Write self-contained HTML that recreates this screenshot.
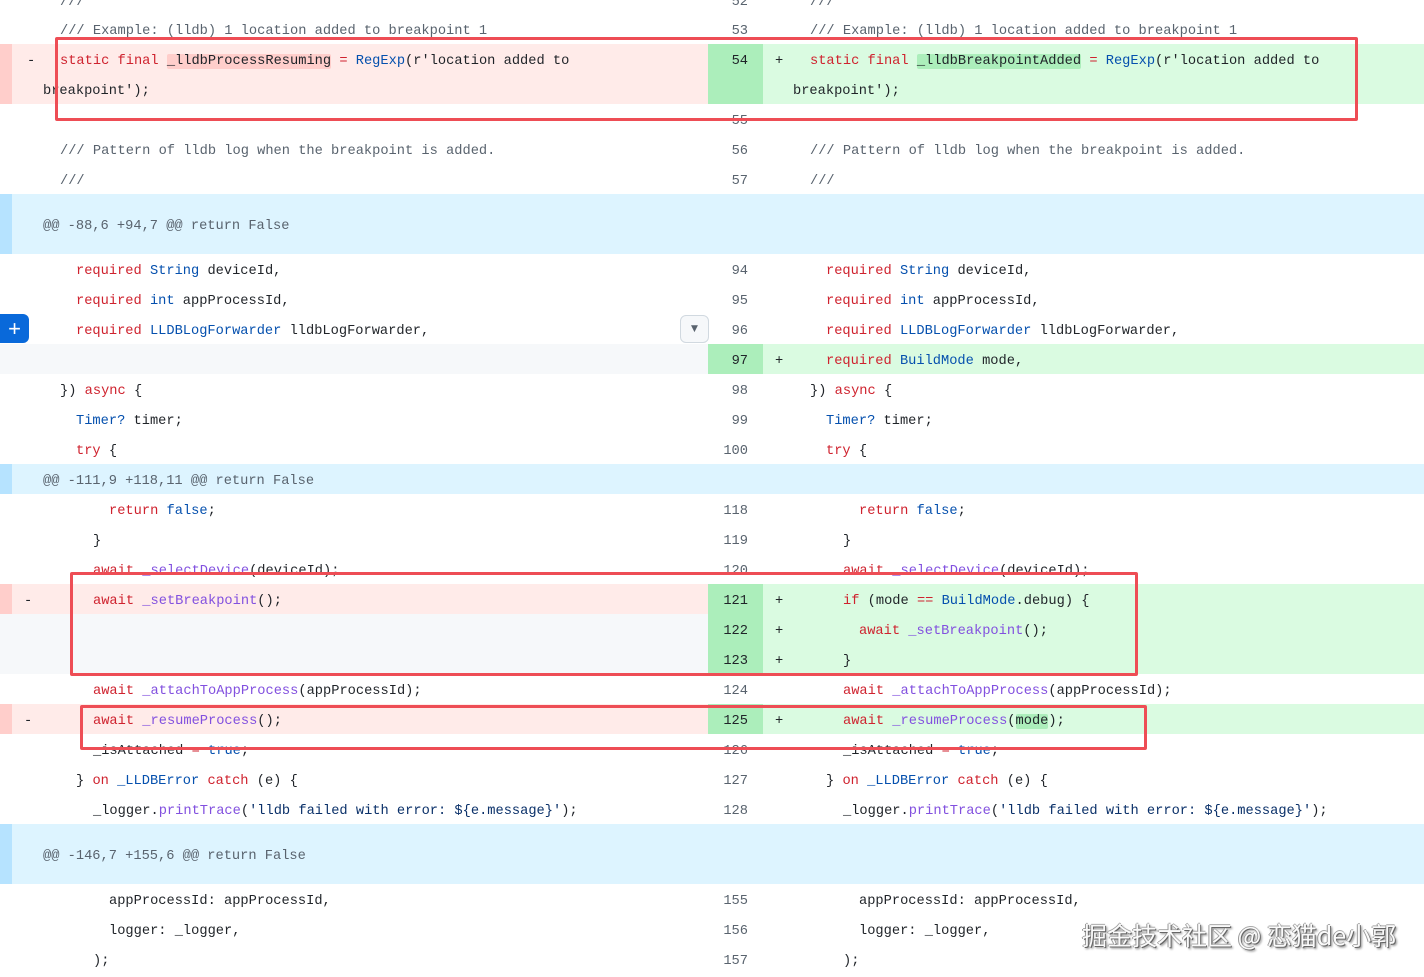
<!DOCTYPE html>
<html><head><meta charset="utf-8"><style>
*{margin:0;padding:0;box-sizing:border-box}
body{width:1424px;height:976px;overflow:hidden;background:#fff;position:relative;font-family:"Liberation Mono",monospace;font-size:13.7px;color:#1f2328}
.r{position:absolute;left:0;width:1424px;height:30px}
.l{position:absolute;left:0;top:0;width:708px;height:100%}
.n{position:absolute;left:708px;top:0;width:55px;height:100%;text-align:right;padding-right:15px;padding-top:3px;line-height:30px;color:#59636e}
.rt{position:absolute;left:763px;top:0;right:0;height:100%}
.t{position:absolute;white-space:pre;line-height:30px;top:0;margin-top:3px}
.del .l{background:#ffebe9}
.del .l::before{content:"";position:absolute;left:0;top:0;width:12px;height:100%;background:#ffcecb}
.add .n{background:#aceebb;color:#1f2328}
.add .rt{background:#dafbe1}
.emp .l{background:#f6f8fa}
.hk{background:#ddf4ff}
.hk::before{content:"";position:absolute;left:0;top:0;width:12px;height:100%;background:#b6e3ff}
.k{color:#cf222e}.ty{color:#0550ae}.f{color:#8250df}.c{color:#59636e}.s{color:#0a3069}
.hd{background:#ffcecb;border-radius:2px}.ha{background:#aceebb;border-radius:2px}
.box{position:absolute;border:3px solid #ee4d55;border-radius:2px}
</style></head><body>

<div class="r" style="top:-15px"><div class="t c" style="left:60px">///</div><div class="n" style="left:708px">52</div><div class="t c" style="left:810px">///</div></div>
<div class="r" style="top:14px"><div class="t c" style="left:60px">/// Example: (lldb) 1 location added to breakpoint 1</div><div class="n">53</div><div class="t c" style="left:810px">/// Example: (lldb) 1 location added to breakpoint 1</div></div>
<div class="r del add" style="top:44px;height:60px"><div class="l"></div><div class="n">54</div><div class="rt"></div>
<div class="t" style="left:27px">-</div><div class="t" style="left:60px"><span class="k">static</span> <span class="k">final</span> <span class="hd">_lldbProcessResuming</span> <span class="k">=</span> <span class="ty">RegExp</span>(r'location added to</div>
<div class="t" style="left:43px;top:30px">breakpoint');</div>
<div class="t" style="left:775px">+</div><div class="t" style="left:810px"><span class="k">static</span> <span class="k">final</span> <span class="ha">_lldbBreakpointAdded</span> <span class="k">=</span> <span class="ty">RegExp</span>(r'location added to</div>
<div class="t" style="left:793px;top:30px">breakpoint');</div></div>
<div class="r" style="top:104px"><div class="n">55</div></div>
<div class="r" style="top:134px"><div class="t c" style="left:60px">/// Pattern of lldb log when the breakpoint is added.</div><div class="n">56</div><div class="t c" style="left:810px">/// Pattern of lldb log when the breakpoint is added.</div></div>
<div class="r" style="top:164px"><div class="t c" style="left:60px">///</div><div class="n">57</div><div class="t c" style="left:810px">///</div></div>
<div class="r hk" style="top:194px;height:60px"><div class="t c" style="left:43px;line-height:60px">@@ -88,6 +94,7 @@ return False</div></div>
<div class="r" style="top:254px"><div class="t" style="left:76px"><span class="k">required</span> <span class="ty">String</span> deviceId,</div><div class="n">94</div><div class="t" style="left:826px"><span class="k">required</span> <span class="ty">String</span> deviceId,</div></div>
<div class="r" style="top:284px"><div class="t" style="left:76px"><span class="k">required</span> <span class="ty">int</span> appProcessId,</div><div class="n">95</div><div class="t" style="left:826px"><span class="k">required</span> <span class="ty">int</span> appProcessId,</div></div>
<div class="r" style="top:314px"><div class="t" style="left:76px"><span class="k">required</span> <span class="ty">LLDBLogForwarder</span> lldbLogForwarder,</div><div class="n">96</div><div class="t" style="left:826px"><span class="k">required</span> <span class="ty">LLDBLogForwarder</span> lldbLogForwarder,</div></div>
<div class="r emp add" style="top:344px"><div class="l"></div><div class="n">97</div><div class="rt"></div><div class="t" style="left:775px">+</div><div class="t" style="left:826px"><span class="k">required</span> <span class="ty">BuildMode</span> mode,</div></div>
<div class="r" style="top:374px"><div class="t" style="left:60px">}) <span class="k">async</span> {</div><div class="n">98</div><div class="t" style="left:810px">}) <span class="k">async</span> {</div></div>
<div class="r" style="top:404px"><div class="t" style="left:76px"><span class="ty">Timer?</span> timer;</div><div class="n">99</div><div class="t" style="left:826px"><span class="ty">Timer?</span> timer;</div></div>
<div class="r" style="top:434px"><div class="t" style="left:76px"><span class="k">try</span> {</div><div class="n">100</div><div class="t" style="left:826px"><span class="k">try</span> {</div></div>
<div class="r hk" style="top:464px"><div class="t c" style="left:43px">@@ -111,9 +118,11 @@ return False</div></div>
<div class="r" style="top:494px"><div class="t" style="left:109px"><span class="k">return</span> <span class="ty">false</span>;</div><div class="n">118</div><div class="t" style="left:859px"><span class="k">return</span> <span class="ty">false</span>;</div></div>
<div class="r" style="top:524px"><div class="t" style="left:93px">}</div><div class="n">119</div><div class="t" style="left:843px">}</div></div>
<div class="r" style="top:554px"><div class="t" style="left:93px"><span class="k">await</span> <span class="f">_selectDevice</span>(deviceId);</div><div class="n">120</div><div class="t" style="left:843px"><span class="k">await</span> <span class="f">_selectDevice</span>(deviceId);</div></div>
<div class="r del add" style="top:584px"><div class="l"></div><div class="n">121</div><div class="rt"></div><div class="t" style="left:24px">-</div><div class="t" style="left:93px"><span class="k">await</span> <span class="f">_setBreakpoint</span>();</div><div class="t" style="left:775px">+</div><div class="t" style="left:843px"><span class="k">if</span> (mode <span class="k">==</span> <span class="ty">BuildMode</span>.debug) {</div></div>
<div class="r emp add" style="top:614px"><div class="l"></div><div class="n">122</div><div class="rt"></div><div class="t" style="left:775px">+</div><div class="t" style="left:859px"><span class="k">await</span> <span class="f">_setBreakpoint</span>();</div></div>
<div class="r emp add" style="top:644px"><div class="l"></div><div class="n">123</div><div class="rt"></div><div class="t" style="left:775px">+</div><div class="t" style="left:843px">}</div></div>
<div class="r" style="top:674px"><div class="t" style="left:93px"><span class="k">await</span> <span class="f">_attachToAppProcess</span>(appProcessId);</div><div class="n">124</div><div class="t" style="left:843px"><span class="k">await</span> <span class="f">_attachToAppProcess</span>(appProcessId);</div></div>
<div class="r del add" style="top:704px"><div class="l"></div><div class="n">125</div><div class="rt"></div><div class="t" style="left:24px">-</div><div class="t" style="left:93px"><span class="k">await</span> <span class="f">_resumeProcess</span>();</div><div class="t" style="left:775px">+</div><div class="t" style="left:843px"><span class="k">await</span> <span class="f">_resumeProcess</span>(<span class="ha">mode</span>);</div></div>
<div class="r" style="top:734px"><div class="t" style="left:93px">_isAttached <span class="k">=</span> <span class="ty">true</span>;</div><div class="n">126</div><div class="t" style="left:843px">_isAttached <span class="k">=</span> <span class="ty">true</span>;</div></div>
<div class="r" style="top:764px"><div class="t" style="left:76px">} <span class="k">on</span> <span class="ty">_LLDBError</span> <span class="k">catch</span> (e) {</div><div class="n">127</div><div class="t" style="left:826px">} <span class="k">on</span> <span class="ty">_LLDBError</span> <span class="k">catch</span> (e) {</div></div>
<div class="r" style="top:794px"><div class="t" style="left:93px">_logger.<span class="f">printTrace</span>(<span class="s">'lldb failed with error: ${e.message}'</span>);</div><div class="n">128</div><div class="t" style="left:843px">_logger.<span class="f">printTrace</span>(<span class="s">'lldb failed with error: ${e.message}'</span>);</div></div>
<div class="r hk" style="top:824px;height:60px"><div class="t c" style="left:43px;line-height:60px">@@ -146,7 +155,6 @@ return False</div></div>
<div class="r" style="top:884px"><div class="t" style="left:109px">appProcessId: appProcessId,</div><div class="n">155</div><div class="t" style="left:859px">appProcessId: appProcessId,</div></div>
<div class="r" style="top:914px"><div class="t" style="left:109px">logger: _logger,</div><div class="n">156</div><div class="t" style="left:859px">logger: _logger,</div></div>
<div class="r" style="top:944px"><div class="t" style="left:93px">);</div><div class="n">157</div><div class="t" style="left:843px">);</div></div>

<div style="position:absolute;left:0;top:314px;width:29px;height:29px;background:#0969da;border-radius:0 6px 6px 0;color:#fff;font:22px/29px 'Liberation Sans',sans-serif;text-align:center">+</div>
<div style="position:absolute;left:680px;top:315px;width:29px;height:28px;background:#f6f8fa;border:1px solid #d1d9e0;border-radius:6px;color:#59636e;font:9px/26px 'DejaVu Sans',sans-serif;text-align:center">▼</div>

<div class="box" style="left:55px;top:37px;width:1303px;height:84px"></div>
<div class="box" style="left:70px;top:572px;width:1068px;height:104px"></div>
<div class="box" style="left:80px;top:705px;width:1067px;height:45px"></div>

<div style="position:absolute;left:1082px;top:918px;font:25px/34px 'Noto Sans CJK SC','WenQuanYi Zen Hei',sans-serif;color:#fafafa;text-shadow:1px 1px 0 #666,-1px 0 0 #999,0 -1px 0 #aaa,2px 2px 2px #888;white-space:nowrap">掘金技术社区 @ 恋猫de小郭</div>
</body></html>
